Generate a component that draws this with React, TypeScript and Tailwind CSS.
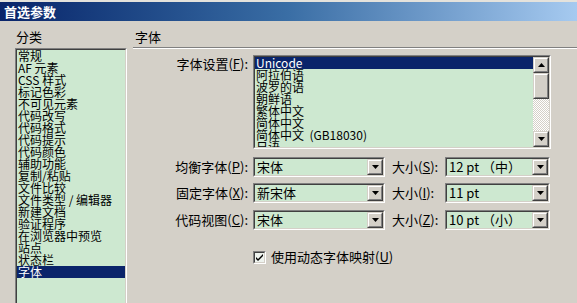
import React from "react";

function Sunken({ className = "", inner = "", children }: { className?: string; inner?: string; children?: React.ReactNode }) {
  return (
    <div className={"border border-t-[#808080] border-l-[#808080] border-r-white border-b-white " + className}>
      <div className={"h-full w-full border border-t-[#404040] border-l-[#404040] border-r-[#d4d0c8] border-b-[#d4d0c8] " + inner}>
        {children}
      </div>
    </div>
  );
}

function Raised({ className = "", children }: { className?: string; children?: React.ReactNode }) {
  return (
    <div className={"border border-t-[#d4d0c8] border-l-[#d4d0c8] border-r-[#404040] border-b-[#404040] bg-[#d4d0c8] " + className}>
      <div className="h-full w-full border border-t-white border-l-white border-r-[#808080] border-b-[#808080] flex items-center justify-center">
        {children}
      </div>
    </div>
  );
}

function Arrow({ up = false }: { up?: boolean }) {
  return (
    <svg width="7" height="4" viewBox="0 0 7 4" className="block">
      {up ? <path d="M3.5 0 L7 4 L0 4 Z" fill="#000" /> : <path d="M0 0 L7 0 L3.5 4 Z" fill="#000" />}
    </svg>
  );
}

function Select({ width, text }: { width: string; text: string }) {
  return (
    <Sunken className={width + " h-[20px]"} inner="bg-[#cde8d0] flex items-center">
      <div className="flex-1 pl-[2px] leading-[14px] whitespace-pre">{text}</div>
      <Raised className="w-[16px] h-[16px]">
        <Arrow />
      </Raised>
    </Sunken>
  );
}

const cats = [
  "常规",
  "AF 元素",
  "CSS 样式",
  "标记色彩",
  "不可见元素",
  "代码改写",
  "代码格式",
  "代码提示",
  "代码颜色",
  "辅助功能",
  "复制/粘贴",
  "文件比较",
  "文件类型 / 编辑器",
  "新建文档",
  "验证程序",
  "在浏览器中预览",
  "站点",
  "状态栏",
  "字体",
];

const encs = ["Unicode", "阿拉伯语", "波罗的语", "朝鲜语", "繁体中文", "简体中文", "简体中文  (GB18030)", "日语"];

export default function App() {
  return (
    <div className="w-[577px] h-[303px] overflow-hidden bg-[#d4d0c8] text-black text-[13px] font-['Noto_Sans_CJK_SC','Liberation_Sans',sans-serif]">
      <div className="h-[2px] bg-[#e4e2dc]" />
      <div className="h-[19px] bg-linear-to-r from-[#0a246a] via-[#3a6ea5] to-[#a6caf0] flex items-center pl-[4px]">
        <span className="text-white font-bold text-[13px] leading-[15px]">首选参数</span>
      </div>
      <div className="flex">
        <div className="ml-[15px] w-[112px] flex flex-col">
          <div className="mt-[9px] leading-[13px] pl-[1px]">分类</div>
          <Sunken className="mt-[5px] h-[270px]" inner="bg-[#cde8d0]">
            {cats.map((c, i) => (
              <div
                key={i}
                className={
                  "h-[12px] text-[12px] leading-[12px] pl-[1px] whitespace-pre " +
                  (i === cats.length - 1 ? "bg-[#0a246a] text-white" : "")
                }
              >
                {c}
              </div>
            ))}
          </Sunken>
        </div>
        <div className="ml-[6px] flex-1 flex flex-col">
          <div className="mt-[9px] leading-[13px] pl-[2px]">字体</div>
          <div className="mt-[4px] h-[1px] bg-[#808080]" />
          <div className="h-[1px] bg-white" />
          <div className="flex mt-[6px]">
            <div className="w-[115px] text-right pt-[2px] leading-[14px]">
              字体设置(<u>F</u>):
            </div>
            <Sunken className="ml-[5px] w-[298px] h-[94px]" inner="bg-[#cde8d0] flex overflow-hidden">
              <div className="flex-1 overflow-hidden">
                {encs.map((e, i) => (
                  <div
                    key={i}
                    className={
                      "h-[12px] text-[12px] leading-[12px] pl-[1px] whitespace-pre " +
                      (i === 0 ? "bg-[#0a246a] text-white" : "")
                    }
                  >
                    {e}
                  </div>
                ))}
              </div>
              <div className="w-[16px] flex flex-col">
                <Raised className="h-[16px]">
                  <Arrow up />
                </Raised>
                <Raised className="h-[26px]" />
                <div className="flex-1 bg-[repeating-conic-gradient(#ffffff_0_25%,#d4d0c8_0_50%)] bg-[length:2px_2px]" />
                <Raised className="h-[16px]">
                  <Arrow />
                </Raised>
              </div>
            </Sunken>
          </div>
          {[
            ["均衡字体", "P", "宋体", "S", "12 pt （中）", "mt-[8px]"],
            ["固定字体", "X", "新宋体", "I", "11 pt", "mt-[6px]"],
            ["代码视图", "C", "宋体", "Z", "10 pt （小）", "mt-[7px]"],
          ].map(([l, k, v, k2, v2, m]) => (
            <div key={l} className={"flex items-center " + m}>
              <div className="w-[115px] text-right leading-[14px]">
                {l}(<u>{k}</u>):
              </div>
              <div className="ml-[5px]">
                <Select width="w-[132px]" text={v} />
              </div>
              <div className="ml-[7px] w-[48px] leading-[14px]">
                大小(<u>{k2}</u>):
              </div>
              <div className="ml-[5px]">
                <Select width="w-[105px]" text={v2} />
              </div>
            </div>
          ))}
          <div className="flex items-center mt-[20px] ml-[120px]">
            <Sunken className="w-[13px] h-[13px]" inner="bg-[#eef3ee] flex items-center justify-center">
              <svg width="7" height="7" viewBox="0 0 7 7" className="block">
                <path d="M0 3 L2 5 L7 0 L7 2 L2 7 L0 5 Z" fill="#000" />
              </svg>
            </Sunken>
            <div className="ml-[5px] leading-[14px]">
              使用动态字体映射(<u>U</u>)
            </div>
          </div>
        </div>
      </div>
    </div>
  );
}
